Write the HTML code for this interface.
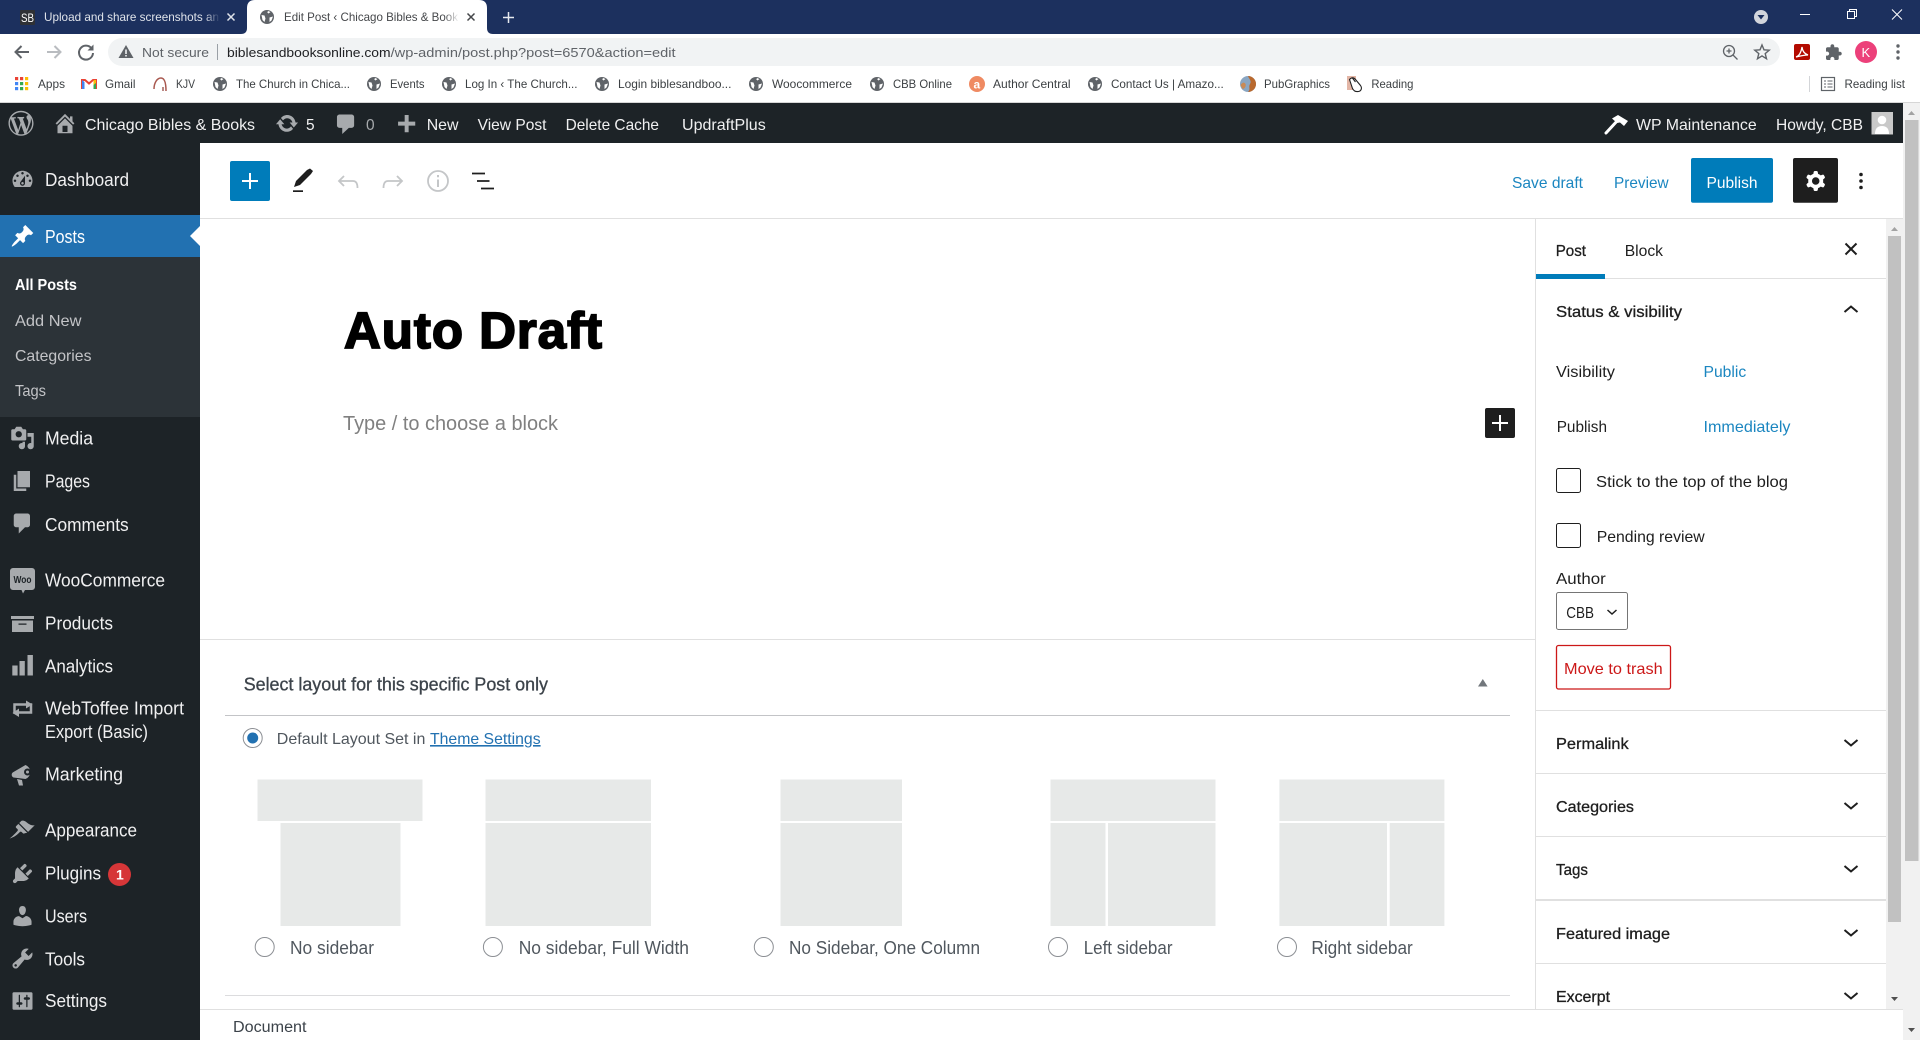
<!DOCTYPE html>
<html lang="en"><head><meta charset="utf-8"><title>Edit Post ‹ Chicago Bibles &amp; Books</title>
<style>
html,body{margin:0;padding:0;background:#fff;overflow:hidden;width:1920px;height:1040px}
svg{display:block}
text{font-family:"Liberation Sans",Arial,sans-serif;white-space:pre}
.tab{font-size:12px}
.bm{font-size:12px;fill:#3c4043}
.ab{font-size:16px;fill:#f0f0f1}
.m{font-size:18px;fill:#f0f0f1}
.s{font-size:16px;fill:#c3c4c7}
.p{font-size:16px;fill:#1e1e1e}
.sb{stroke-width:.3px}
.l{font-size:18px;fill:#50575e}
.b{font-size:16px;fill:#1b86c0}
.ic{fill:#a7aaad}
.d{fill:none;stroke:#1e1e1e;stroke-width:2}
</style></head><body>
<svg xmlns="http://www.w3.org/2000/svg" width="1920" height="1040" viewBox="0 0 1920 1040">
<defs>
<linearGradient id="f1" x1="0" x2="1" y1="0" y2="0"><stop offset="0" stop-color="#1c305e" stop-opacity="0"/><stop offset="1" stop-color="#1c305e"/></linearGradient>
<linearGradient id="f2" x1="0" x2="1" y1="0" y2="0"><stop offset="0" stop-color="#fff" stop-opacity="0"/><stop offset="1" stop-color="#fff"/></linearGradient>
<g id="globe"><circle r="7" fill="#5f6368"/><path d="M-5.500-2L-2.500-1.500-1.500 1.500-2.500 5-4.500 3zM1-6L3.500-5 1.500-3.500.3-4.500zM2.500.5L6-.5 4.500 3.500 2.500 5z" fill="#fff"/></g>
</defs>

<!-- chrome tab strip -->
<rect width="1920" height="34" fill="#1c305e"/>
<rect x="20" y="10" width="15" height="15" rx="1" fill="#2f3135"/>
<text x="21" y="22" font-size="12" fill="#fff" textLength="13" lengthAdjust="spacingAndGlyphs">SB</text>
<text class="tab" x="44" y="21" fill="#dfe3ea" textLength="175" lengthAdjust="spacingAndGlyphs">Upload and share screenshots an</text>
<rect x="205" y="8" width="15" height="20" fill="url(#f1)"/>
<path d="M227.500 13.500l7 7m0-7l-7 7" stroke="#dfe3ea" stroke-width="1.500" fill="none"/>
<path d="M241 34Q247 34 247 28V8Q247 0 255 0H479Q487 0 487 8V28Q487 34 493 34Z" fill="#fff"/>
<use href="#globe" x="267" y="17"/>
<text class="tab" x="284" y="21" fill="#45474a" textLength="174" lengthAdjust="spacingAndGlyphs">Edit Post ‹ Chicago Bibles &amp; Book</text>
<rect x="444" y="8" width="15" height="20" fill="url(#f2)"/>
<path d="M467.500 13.500l7 7m0-7l-7 7" stroke="#45474a" stroke-width="1.500" fill="none"/>
<path d="M503 17.500h11m-5.500-5.500v11" stroke="#e6e9ef" stroke-width="1.500" fill="none"/>
<circle cx="1761" cy="17" r="7" fill="#d2d5dc"/><path d="M1757.500 15h7l-3.500 4.500z" fill="#1c305e"/>
<path d="M1800 14.500h10" stroke="#fff" stroke-width="1"/>
<path d="M1847.500 11.500h7v7h-7zM1849.500 11.500v-2h7v7h-2" stroke="#fff" stroke-width="1" fill="none"/>
<path d="M1892 9.500l10 10m0-10l-10 10" stroke="#fff" stroke-width="1" fill="none"/>

<!-- chrome toolbar -->
<rect y="34" width="1920" height="68" fill="#fff"/>
<path d="M29 52H16M21.500 46L15.500 52l6 6" stroke="#5f6368" stroke-width="2" fill="none"/>
<path d="M47 52H60M54.500 46L60.500 52l-6 6" stroke="#b9bcc0" stroke-width="2" fill="none"/>
<path d="M91.500 48.300A7 7 0 1 0 93 53" stroke="#5f6368" stroke-width="2" fill="none"/><path d="M93.500 44.500v6h-6z" fill="#5f6368"/>
<path d="M108 52a14 14 0 0 1 14-14H1766a14 14 0 0 1 0 28H122a14 14 0 0 1-14-14z" fill="#f1f3f4"/>
<path d="M126 45l7.500 13h-15z" fill="#5f6368"/><path d="M125.200 49.500h1.600v4.500h-1.600zM125.200 55h1.600v1.500h-1.600z" fill="#f1f3f4"/>
<text x="142" y="57" font-size="13" fill="#5f6368" textLength="67" lengthAdjust="spacingAndGlyphs">Not secure</text>
<rect x="217" y="44" width="1" height="16" fill="#9aa0a6"/>
<text x="227" y="57" font-size="13" fill="#202124" textLength="163.600" lengthAdjust="spacingAndGlyphs">biblesandbooksonline.com</text>
<text x="390.600" y="57" font-size="13" fill="#5f6368" textLength="285" lengthAdjust="spacingAndGlyphs">/wp-admin/post.php?post=6570&amp;action=edit</text>
<circle cx="1729" cy="51" r="5.500" fill="none" stroke="#5f6368" stroke-width="1.300"/><path d="M1733 55l4.500 4.500M1726.500 51h5M1729 48.500v5" stroke="#5f6368" stroke-width="1.300" fill="none"/>
<path d="M1762 45l2 4.800 5.200.4-4 3.400 1.300 5.100-4.500-2.800-4.500 2.800 1.300-5.100-4-3.400 5.200-.4z" fill="none" stroke="#5f6368" stroke-width="1.400"/>
<rect x="1794" y="44" width="16" height="16" rx="2" fill="#b30b00"/>
<path d="M1796 57c3-1 5-4 6-10 .5 5 3 7 6 8-3 0-6 .5-12 2z" fill="none" stroke="#fff" stroke-width="1.300"/>
<g transform="translate(1824.500 43.500) scale(.75)"><path d="M20.500 11H19V7c0-1.100-.9-2-2-2h-4V3.500C13 2.120 11.880 1 10.500 1S8 2.120 8 3.500V5H4c-1.100 0-1.990.9-1.990 2v3.800H3.500c1.490 0 2.700 1.210 2.700 2.700s-1.210 2.700-2.700 2.700H2V20c0 1.100.9 2 2 2h3.800v-1.500c0-1.490 1.210-2.700 2.700-2.700 1.490 0 2.700 1.210 2.700 2.700V22H17c1.100 0 2-.9 2-2v-4h1.500c1.380 0 2.500-1.120 2.500-2.500S21.880 11 20.500 11z" fill="#5f6368"/></g>
<circle cx="1866" cy="52" r="11" fill="#ec407a"/><text x="1861.500" y="57" font-size="13" fill="#fff">K</text>
<circle cx="1898" cy="46" r="1.700" fill="#5f6368"/><circle cx="1898" cy="52" r="1.700" fill="#5f6368"/><circle cx="1898" cy="58" r="1.700" fill="#5f6368"/>

<!-- bookmarks -->
<g>
<rect x="15" y="77" width="3.200" height="3.200" fill="#ea4335"/><rect x="20" y="77" width="3.200" height="3.200" fill="#ea4335"/><rect x="25" y="77" width="3.200" height="3.200" fill="#fbbc04"/>
<rect x="15" y="82" width="3.200" height="3.200" fill="#4285f4"/><rect x="20" y="82" width="3.200" height="3.200" fill="#34a853"/><rect x="25" y="82" width="3.200" height="3.200" fill="#fbbc04"/>
<rect x="15" y="87" width="3.200" height="3.200" fill="#4285f4"/><rect x="20" y="87" width="3.200" height="3.200" fill="#34a853"/><rect x="25" y="87" width="3.200" height="3.200" fill="#fbbc04"/>
</g>
<text class="bm" x="38" y="88" textLength="27" lengthAdjust="spacingAndGlyphs">Apps</text>
<path d="M82 89V80l3 0 4 3.500 4-3.500 3 0v9" fill="none" stroke="#ea4335" stroke-width="2"/><path d="M82 80v9h2.500v-7z" fill="#4285f4"/><path d="M96 80v9h-2.500v-7z" fill="#34a853"/><path d="M93.500 80l2.500 0v3l-2.500 2z" fill="#fbbc04"/>
<text class="bm" x="105" y="88" textLength="30.500" lengthAdjust="spacingAndGlyphs">Gmail</text>
<path d="M154 89c0-6 3-11 7-11s5 6 5 13" fill="none" stroke="#a9584f" stroke-width="1.500"/><path d="M163 87v4" stroke="#8a3a33" stroke-width="1.200"/>
<text class="bm" x="176" y="88" textLength="19" lengthAdjust="spacingAndGlyphs">KJV</text>
<use href="#globe" x="220" y="84"/><text class="bm" x="236" y="88" textLength="114" lengthAdjust="spacingAndGlyphs">The Church in Chica...</text>
<use href="#globe" x="374" y="84"/><text class="bm" x="390" y="88" textLength="34.500" lengthAdjust="spacingAndGlyphs">Events</text>
<use href="#globe" x="449" y="84"/><text class="bm" x="465" y="88" textLength="112.500" lengthAdjust="spacingAndGlyphs">Log In ‹ The Church...</text>
<use href="#globe" x="602" y="84"/><text class="bm" x="618" y="88" textLength="113.400" lengthAdjust="spacingAndGlyphs">Login biblesandboo...</text>
<use href="#globe" x="756" y="84"/><text class="bm" x="772" y="88" textLength="80" lengthAdjust="spacingAndGlyphs">Woocommerce</text>
<use href="#globe" x="877" y="84"/><text class="bm" x="893" y="88" textLength="59" lengthAdjust="spacingAndGlyphs">CBB Online</text>
<circle cx="977" cy="84" r="8" fill="#ef8a62"/><text x="973.500" y="88.500" font-size="12" font-weight="bold" fill="#fff">a</text>
<text class="bm" x="993" y="88" textLength="77.600" lengthAdjust="spacingAndGlyphs">Author Central</text>
<use href="#globe" x="1095" y="84"/><text class="bm" x="1111" y="88" textLength="112.700" lengthAdjust="spacingAndGlyphs">Contact Us | Amazo...</text>
<circle cx="1248" cy="84" r="8" fill="#8aa6c2"/><path d="M1248 76a8 8 0 0 1 0 16c3-3 0-5 2-8s-1-5-2-8z" fill="#b9692e"/><path d="M1240.500 85c2-3 4-3 5-1s-1 5-3 5z" fill="#c98a55"/>
<text class="bm" x="1264" y="88" textLength="66" lengthAdjust="spacingAndGlyphs">PubGraphics</text>
<rect x="1347" y="76" width="9" height="14" fill="#e3b6a6"/><path d="M1349.500 79.500c2-2.500 4.500-2 6 0l5 6c2 3 .5 5.500-2 6-3 .5-5-1-6-3zM1352 77.500l3.500 4.500" fill="#fff" stroke="#222" stroke-width="1.100"/>
<text class="bm" x="1371.400" y="88" textLength="42" lengthAdjust="spacingAndGlyphs">Reading</text>
<rect x="1809" y="76" width="1" height="16" fill="#d3d5d8"/>
<rect x="1821.500" y="77.500" width="13" height="13" fill="none" stroke="#5f6368" stroke-width="1.200"/><path d="M1824 81h2m1.500 0h5M1824 84h2m1.500 0h5M1824 87h2m1.500 0h5" stroke="#5f6368" stroke-width="1.100"/>
<text class="bm" x="1844.500" y="88" textLength="60.500" lengthAdjust="spacingAndGlyphs">Reading list</text>
<rect y="102" width="1920" height="1" fill="#d6d6d6"/>

<!-- admin bar -->
<rect y="103" width="1903" height="40" fill="#1d2327"/>
<g class="ic" transform="translate(8.500 110.800) scale(1.250)"><path fill-rule="evenodd" d="M20 10c0-5.510-4.490-10-10-10C4.480 0 0 4.490 0 10c0 5.520 4.480 10 10 10 5.510 0 10-4.480 10-10zM7.780 15.370L4.370 6.220c.55-.02 1.170-.08 1.170-.08.5-.06.44-1.130-.06-1.110 0 0-1.450.11-2.370.11-.18 0-.37 0-.58-.01C4.120 2.690 6.870 1.110 10 1.110c2.330 0 4.450.87 6.050 2.340-.68-.11-1.650.39-1.650 1.580 0 .74.45 1.360.9 2.100.35.61.55 1.360.55 2.460 0 1.490-1.400 5-1.400 5l-3.030-8.370c.54-.02.82-.17.82-.17.5-.05.44-1.250-.06-1.220 0 0-1.440.12-2.380.12-.87 0-2.330-.12-2.330-.12-.5-.03-.56 1.200-.06 1.220l.92.08 1.260 3.410zM17.410 10c.24-.64.74-1.870.43-4.250.7 1.290 1.050 2.710 1.050 4.250 0 3.290-1.730 6.240-4.400 7.780.97-2.590 1.940-5.200 2.920-7.780zM6.100 18.090C3.120 16.650 1.110 13.530 1.110 10c0-1.300.23-2.480.72-3.590C3.250 10.300 4.670 14.200 6.100 18.090zm4.030-6.630l2.580 6.980c-.86.29-1.760.45-2.710.45-.79 0-1.570-.11-2.290-.33.81-2.380 1.620-4.740 2.420-7.100z"/></g>
<g class="ic" transform="translate(52.500 110.800) scale(1.250)"><path fill-rule="evenodd" d="M16 8.500l1.530 1.530-1.060 1.060L10 4.620l-6.470 6.470-1.060-1.060L10 2.500l4 4v-2h2v4zm-6-2.460l6 5.990V18H4v-5.970zM12 17v-5H8v5h4z"/></g>
<text class="ab" x="85" y="130" textLength="170" lengthAdjust="spacingAndGlyphs">Chicago Bibles &amp; Books</text>
<g class="ic" transform="translate(275 110.900) scale(1.200 1.250)"><path d="M10.200 3.280c3.530 0 6.430 2.610 6.920 6h2.080l-3.500 4-3.500-4h2.320c-.45-1.970-2.210-3.450-4.320-3.450-1.450 0-2.730.71-3.540 1.780L4.950 5.660C6.230 4.200 8.110 3.280 10.200 3.280zm-.4 13.440c-3.520 0-6.430-2.610-6.920-6H.8l3.500-4c1.170 1.330 2.330 2.670 3.500 4H5.480c.45 1.970 2.210 3.450 4.320 3.450 1.450 0 2.730-.71 3.540-1.780l1.710 1.950c-1.280 1.460-3.150 2.380-5.250 2.380z"/></g>
<text class="ab" x="306" y="130" textLength="8.600" lengthAdjust="spacingAndGlyphs">5</text>
<g class="ic" transform="translate(333 112) scale(1.320 1.220)"><path d="M5 2h9c1.100 0 2 .9 2 2v7c0 1.100-.9 2-2 2h-2l-5 5v-5H5c-1.100 0-2-.9-2-2V4c0-1.100.9-2 2-2z"/></g>
<text class="ab" x="366" y="130" style="fill:#a7aaad" textLength="8.600" lengthAdjust="spacingAndGlyphs">0</text>
<g class="ic" transform="translate(392.800 112.400) scale(1.320)"><path d="M17 7v3h-5v5H9v-5H4V7h5V2h3v5h5z"/></g>
<text class="ab" x="426.700" y="130" textLength="31.800" lengthAdjust="spacingAndGlyphs">New</text>
<text class="ab" x="477.600" y="130" textLength="68.900" lengthAdjust="spacingAndGlyphs">View Post</text>
<text class="ab" x="565.600" y="130" textLength="93.400" lengthAdjust="spacingAndGlyphs">Delete Cache</text>
<text class="ab" x="682" y="130" textLength="83.700" lengthAdjust="spacingAndGlyphs">UpdraftPlus</text>
<path d="M1606 133l12-13" stroke="#fff" stroke-width="3" stroke-linecap="round"/><path d="M1612 118.500l6-3.500 10 6-4 5-4-3.500-3 .5z" fill="#fff"/>
<text class="ab" x="1636" y="130" textLength="120.700" lengthAdjust="spacingAndGlyphs">WP Maintenance</text>
<text class="ab" x="1776" y="130" textLength="87" lengthAdjust="spacingAndGlyphs">Howdy, CBB</text>
<rect x="1871.500" y="112" width="21.500" height="22.500" fill="#c9c9c9"/><circle cx="1882" cy="120" r="4.300" fill="#fff"/><path d="M1875 134c0-6 3-8 7-8s7 2 7 8z" fill="#fff"/>

<!-- sidebar -->
<rect y="143" width="200" height="897" fill="#1d2327"/>
<g class="ic" transform="translate(10 167) scale(1.250)"><path fill-rule="evenodd" d="M3.760 16h12.480c1.100-1.370 1.760-3.110 1.760-5 0-4.420-3.580-8-8-8s-8 3.580-8 8c0 1.890.66 3.630 1.760 5zM10 4c.55 0 1 .45 1 1s-.45 1-1 1-1-.45-1-1 .45-1 1-1zM6 6c.55 0 1 .45 1 1s-.45 1-1 1-1-.45-1-1 .45-1 1-1zm8 0c.55 0 1 .45 1 1s-.45 1-1 1-1-.45-1-1 .45-1 1-1zm-5.370 5.550L12 7v6c0 1.100-.9 2-2 2s-2-.9-2-2c0-.57.24-1.080.63-1.450zM4 10c.55 0 1 .45 1 1s-.45 1-1 1-1-.45-1-1 .45-1 1-1zm12 0c.55 0 1 .45 1 1s-.45 1-1 1-1-.45-1-1 .45-1 1-1zm-5 3c0-.55-.45-1-1-1s-1 .45-1 1 .45 1 1 1 1-.45 1-1z"/></g>
<text class="m" x="45" y="186" textLength="84" lengthAdjust="spacingAndGlyphs">Dashboard</text>
<rect y="215" width="200" height="42" fill="#2271b1"/>
<path d="M200 226l-10 10 10 10z" fill="#fff"/>
<g fill="#fff" transform="translate(10 223.500) scale(1.250)"><path d="M10.440 3.020l1.820-1.820 6.360 6.350-1.830 1.820c-1.050-.68-2.480-.57-3.410.36l-.75.75c-.92.93-1.040 2.350-.35 3.410l-1.830 1.820-2.410-2.410-2.800 2.790c-.42.42-3.380 2.710-3.800 2.290s1.860-3.390 2.280-3.810l2.790-2.790L4.100 9.360l1.830-1.820c1.050.69 2.480.57 3.400-.36l.75-.75c.93-.92 1.050-2.350.36-3.410z"/></g>
<text class="m" x="45" y="243" style="fill:#fff" textLength="40" lengthAdjust="spacingAndGlyphs">Posts</text>
<rect y="257" width="200" height="160" fill="#2c3338"/>
<text class="s" x="15" y="290" style="fill:#fff" font-weight="bold" textLength="62" lengthAdjust="spacingAndGlyphs">All Posts</text>
<text class="s" x="15" y="326" textLength="66.500" lengthAdjust="spacingAndGlyphs">Add New</text>
<text class="s" x="15" y="361" textLength="76.500" lengthAdjust="spacingAndGlyphs">Categories</text>
<text class="s" x="15" y="396" textLength="31" lengthAdjust="spacingAndGlyphs">Tags</text>

<g class="ic" transform="translate(10 425.500) scale(1.250)"><path fill-rule="evenodd" d="M13 11V4c0-.55-.45-1-1-1h-1.670L9 1H5L3.670 3H2c-.55 0-1 .45-1 1v7c0 .55.45 1 1 1h10c.55 0 1-.45 1-1zM7 4.500c1.380 0 2.500 1.120 2.500 2.500S8.380 9.500 7 9.500 4.500 8.380 4.500 7 5.620 4.500 7 4.500zM14 6h5v10.500c0 1.380-1.120 2.500-2.500 2.500S14 17.880 14 16.500s1.120-2.500 2.500-2.500c.17 0 .34.020.5.050V9h-3V6zm-4 8.050V13h2v3.500c0 1.380-1.120 2.500-2.500 2.500S7 17.880 7 16.500 8.120 14 9.500 14c.17 0 .34.020.5.050z"/></g>
<text class="m" x="45" y="444.500" textLength="48" lengthAdjust="spacingAndGlyphs">Media</text>
<g class="ic" transform="translate(10 468.500) scale(1.250)"><path d="M6 15V2h10v13H6zm-1 1h8v2H3V5h2v11z"/></g>
<text class="m" x="45" y="487.500" textLength="45" lengthAdjust="spacingAndGlyphs">Pages</text>
<g class="ic" transform="translate(10 511) scale(1.250)"><path d="M5 2h9c1.100 0 2 .9 2 2v7c0 1.100-.9 2-2 2h-2l-5 5v-5H5c-1.100 0-2-.9-2-2V4c0-1.100.9-2 2-2z"/></g>
<text class="m" x="45" y="531" textLength="83.700" lengthAdjust="spacingAndGlyphs">Comments</text>

<path d="M13 568h19a3 3 0 0 1 3 3v16a3 3 0 0 1-3 3h-7l-2 3.500-1.500-3.500H13a3 3 0 0 1-3-3v-16a3 3 0 0 1 3-3z" fill="#a7aaad"/>
<text x="13.500" y="583" font-size="10" font-weight="bold" fill="#1d2327" textLength="18" lengthAdjust="spacingAndGlyphs">Woo</text>
<text class="m" x="45" y="586.500" textLength="120" lengthAdjust="spacingAndGlyphs">WooCommerce</text>
<path d="M11 616h23v3H11zM12 620.500h21V632H12zM18.500 623.500v1.300h8v-1.300z" class="ic" fill-rule="evenodd"/>
<text class="m" x="45" y="629.500" textLength="68" lengthAdjust="spacingAndGlyphs">Products</text>
<path d="M12.300 665.500h5.300V675.500h-5.300zM19.500 661h5.300V675.500h-5.300zM27.500 655h5.400V675.500h-5.400z" class="ic"/>
<text class="m" x="45" y="672.500" textLength="68" lengthAdjust="spacingAndGlyphs">Analytics</text>
<rect x="14.500" y="704.500" width="16.500" height="8" fill="none" stroke="#a7aaad" stroke-width="2.500"/>
<path d="M26 700.500l6.500 4-6.500 4zM19 708.500l-6.500 4.500 6.500 4z" class="ic"/>
<text class="m" x="45" y="714.500" textLength="139" lengthAdjust="spacingAndGlyphs">WebToffee Import</text>
<text class="m" x="45" y="738" textLength="103" lengthAdjust="spacingAndGlyphs">Export (Basic)</text>
<path d="M13.500 772L25.500 765a7.500 7.500 0 0 1 0 14L13.500 777.500a3 3 0 0 1 0-5.500zM17 779l5 1 1 5.500h-4z" class="ic"/><circle cx="27.500" cy="772" r="3.500" fill="#1d2327"/><circle cx="27.500" cy="772" r="1.500" fill="#a7aaad"/>
<text class="m" x="45" y="780.500" textLength="78" lengthAdjust="spacingAndGlyphs">Marketing</text>

<g class="ic" transform="translate(10 818) scale(1.250)"><path d="M14.480 11.060L7.410 3.990l1.500-1.500c.5-.56 2.300-.47 3.510.32 1.210.8 1.430 1.280 2.910 2.100 1.180.64 2.450 1.260 4.450.85zm-.71.71L6.700 4.700 4.930 6.470c-.39.39-.39 1.020 0 1.410l1.060 1.060c.39.39.39 1.030 0 1.420-.6.6-1.430 1.590-2.310 2.470-2.630 2.650-3.890 3.530-3.890 3.530s3.400-.99 5.900-3.100c.9-.8 1.600-1.500 2.200-2.100.4-.4 1-.4 1.400 0l1.060 1.060c.39.39 1.020.39 1.410 0z"/></g>
<text class="m" x="45" y="836.500" textLength="92" lengthAdjust="spacingAndGlyphs">Appearance</text>
<g class="ic" transform="translate(10 861) scale(1.250)"><path d="M13.110 4.360L9.870 7.600 8 5.730l3.240-3.240c.35-.34 1.050-.2 1.560.32.52.51.66 1.210.31 1.550zm-8 1.770l.91-1.120 9.010 9.010-1.190.84c-.71.71-2.630 1.160-3.820 1.160H6.140L4.900 17.260c-.59.59-1.540.59-2.120 0-.59-.58-.59-1.530 0-2.120l1.240-1.240v-3.880c0-1.130.4-3.190 1.090-3.890zm7.260 3.970l3.240-3.240c.34-.35 1.040-.21 1.550.31.52.51.66 1.210.31 1.550l-3.240 3.250z"/></g>
<text class="m" x="45" y="879.500" textLength="56" lengthAdjust="spacingAndGlyphs">Plugins</text>
<circle cx="119.500" cy="874.500" r="11.500" fill="#d63638"/><text x="116" y="879.500" font-size="14" font-weight="bold" fill="#fff">1</text>
<g class="ic" transform="translate(10 903.500) scale(1.250)"><path d="M10 9.250c-2.270 0-2.730-3.440-2.730-3.440C7 4.020 7.820 2 9.970 2c2.160 0 2.980 2.020 2.710 3.810 0 0-.41 3.440-2.680 3.440zm0 2.570L12.720 10c2.390 0 4.520 2.330 4.520 4.530v2.490s-3.650 1.130-7.240 1.130c-3.650 0-7.240-1.130-7.240-1.130v-2.490c0-2.250 1.940-4.480 4.470-4.480z"/></g>
<text class="m" x="45" y="922.500" textLength="42" lengthAdjust="spacingAndGlyphs">Users</text>
<g class="ic" transform="translate(10 946) scale(1.250)"><path fill-rule="evenodd" d="M16.680 9.770c-1.340 1.340-3.300 1.670-4.950.99l-5.410 6.520c-.99.99-2.590.99-3.580 0s-.99-2.590 0-3.570l6.520-5.420c-.68-1.650-.35-3.610.99-4.950 1.280-1.280 3.120-1.620 4.720-1.060l-2.890 2.890 2.820 2.820 2.860-2.870c.53 1.580.18 3.390-1.080 4.650zM3.810 16.210c.4.39 1.040.39 1.430 0 .4-.4.4-1.040 0-1.430-.39-.4-1.030-.4-1.430 0-.39.39-.39 1.030 0 1.430z"/></g>
<text class="m" x="45" y="965.500" textLength="40" lengthAdjust="spacingAndGlyphs">Tools</text>
<g class="ic" transform="translate(10 988.500) scale(1.250)"><path fill-rule="evenodd" d="M18 16V4c0-.55-.45-1-1-1H3c-.55 0-1 .45-1 1v12c0 .55.45 1 1 1h14c.55 0 1-.45 1-1zM8 11h1c.55 0 1 .45 1 1s-.45 1-1 1H8v1.500c0 .28-.22.5-.5.5s-.5-.22-.5-.5V13H6c-.55 0-1-.45-1-1s.45-1 1-1h1V5.500c0-.28.22-.5.5-.5s.5.22.5.5V11zm5-2h-1c-.55 0-1-.45-1-1s.45-1 1-1h1V5.500c0-.28.22-.5.5-.5s.5.22.5.5V7h1c.55 0 1 .45 1 1s-.45 1-1 1h-1v5.500c0 .28-.22.5-.5.5s-.5-.22-.5-.5V9z"/></g>
<text class="m" x="45" y="1007" textLength="62" lengthAdjust="spacingAndGlyphs">Settings</text>

<!-- editor header -->
<rect x="200" y="218" width="1703" height="1" fill="#e0e0e0"/>
<rect x="230" y="161" width="40" height="40" rx="2" fill="#007cba"/>
<path d="M242 181h16m-8-8v16" stroke="#fff" stroke-width="2" fill="none"/>
<path d="M294 187l2-6 11-11 3-1.500 3 2.500-2 3-11 11z" fill="#1e1e1e"/><rect x="293" y="190.300" width="10" height="1.700" fill="#1e1e1e"/>
<path d="M344 176l-5 5 5 5M339.500 181H353c3 0 4.500 2 4.500 7" fill="none" stroke="#c4c6c8" stroke-width="1.800"/>
<path d="M397 176l5 5-5 5M401.500 181H388c-3 0-4.500 2-4.500 7" fill="none" stroke="#c4c6c8" stroke-width="1.800"/>
<circle cx="438" cy="181" r="10" fill="none" stroke="#c4c6c8" stroke-width="1.800"/><path d="M437 179.500h2v7.500h-2zM437 175h2v2.300h-2z" fill="#c4c6c8"/>
<path d="M472 173.500h13M477 181h12.500M481 188.500h13" stroke="#1e1e1e" stroke-width="1.800" fill="none"/>
<text class="b" x="1512" y="188" textLength="71" lengthAdjust="spacingAndGlyphs">Save draft</text>
<text class="b" x="1614" y="188" textLength="54.600" lengthAdjust="spacingAndGlyphs">Preview</text>
<rect x="1691" y="158" width="82" height="44.700" rx="2" fill="#007cba"/>
<text x="1706.500" y="188" font-size="16" fill="#fff" textLength="51" lengthAdjust="spacingAndGlyphs">Publish</text>
<rect x="1793" y="158" width="45" height="44.700" rx="2" fill="#1e1e1e"/>
<g transform="translate(1800.800 166) scale(1.250)"><path fill="#fff" fill-rule="evenodd" d="M10.289 4.836A1 1 0 0111.275 4h1.306a1 1 0 01.987.836l.244 1.466c.787.26 1.503.679 2.108 1.218l1.393-.522a1 1 0 011.216.437l.653 1.130a1 1 0 01-.23 1.273l-1.148.944a6.025 6.025 0 010 2.435l1.149.946a1 1 0 01.23 1.272l-.653 1.130a1 1 0 01-1.216.437l-1.394-.522c-.605.54-1.320.958-2.108 1.218l-.244 1.466a1 1 0 01-.987.836h-1.306a1 1 0 01-.986-.836l-.244-1.466a5.995 5.995 0 01-2.108-1.218l-1.394.522a1 1 0 01-1.217-.436l-.653-1.131a1 1 0 01.23-1.272l1.149-.946a6.026 6.026 0 010-2.435l-1.148-.944a1 1 0 01-.23-1.272l.653-1.131a1 1 0 011.217-.437l1.393.522a5.994 5.994 0 012.108-1.218l.244-1.466zM14.929 12a3 3 0 11-6 0 3 3 0 016 0z"/></g>
<circle cx="1861" cy="174.500" r="1.800" fill="#1e1e1e"/><circle cx="1861" cy="181" r="1.800" fill="#1e1e1e"/><circle cx="1861" cy="187.500" r="1.800" fill="#1e1e1e"/>

<!-- editor content -->
<text x="344" y="348" font-size="51" font-weight="bold" fill="#000" stroke="#000" stroke-width="1.800" textLength="258">Auto Draft</text>
<text x="343" y="430" font-size="20" fill="#808080" textLength="215" lengthAdjust="spacingAndGlyphs">Type / to choose a block</text>
<rect x="1485" y="408" width="30" height="30" rx="2" fill="#1e1e1e"/>
<path d="M1492 423h16m-8-8v16" stroke="#fff" stroke-width="2" fill="none"/>
<rect x="200" y="639" width="1336" height="1" fill="#e0e0e0"/>
<text class="sb" x="243.700" y="690.500" font-size="18" fill="#3c434a" stroke="#3c434a" textLength="304.300" lengthAdjust="spacingAndGlyphs">Select layout for this specific Post only</text>
<path d="M1478 686.500l4.800-7.500 4.800 7.500z" fill="#72777c"/>
<rect x="225" y="715" width="1285" height="1" fill="#c3c4c7"/>
<circle cx="252.700" cy="738" r="9.500" fill="#fff" stroke="#8c8f94"/><circle cx="252.700" cy="738" r="5.500" fill="#2271b1"/>
<text x="276.800" y="744" font-size="16" fill="#50575e" textLength="148.600" lengthAdjust="spacingAndGlyphs">Default Layout Set in</text>
<text x="430" y="744" font-size="16" fill="#2271b1" text-decoration="underline" textLength="110.600" lengthAdjust="spacingAndGlyphs">Theme Settings</text>

<g fill="#e7e9e8">
<rect x="257.500" y="779.500" width="165" height="41.500"/><rect x="280.500" y="823" width="120" height="103"/>
<rect x="485.500" y="779.500" width="165.500" height="41.500"/><rect x="485.500" y="823" width="165.500" height="103"/>
<rect x="780.500" y="779.500" width="121.500" height="41.500"/><rect x="780.500" y="823" width="121.500" height="103"/>
<rect x="1050.500" y="779.500" width="165" height="41.500"/><rect x="1050.500" y="823" width="55" height="103"/><rect x="1108" y="823" width="107.500" height="103"/>
<rect x="1279.400" y="779.500" width="165" height="41.500"/><rect x="1279.400" y="823" width="107.600" height="103"/><rect x="1389.700" y="823" width="54.700" height="103"/>
</g>
<g fill="#fff" stroke="#8c8f94">
<circle cx="264.700" cy="947" r="9.500"/><circle cx="492.900" cy="947" r="9.500"/><circle cx="763.800" cy="947" r="9.500"/><circle cx="1058" cy="947" r="9.500"/><circle cx="1287" cy="947" r="9.500"/>
</g>
<text class="l" x="290" y="954" textLength="84" lengthAdjust="spacingAndGlyphs">No sidebar</text>
<text class="l" x="518.700" y="954" textLength="170.300" lengthAdjust="spacingAndGlyphs">No sidebar, Full Width</text>
<text class="l" x="789" y="954" textLength="191" lengthAdjust="spacingAndGlyphs">No Sidebar, One Column</text>
<text class="l" x="1083.700" y="954" textLength="88.800" lengthAdjust="spacingAndGlyphs">Left sidebar</text>
<text class="l" x="1311.400" y="954" textLength="101.400" lengthAdjust="spacingAndGlyphs">Right sidebar</text>
<rect x="225" y="995" width="1285" height="1" fill="#dcdcde"/>

<!-- right panel -->
<rect x="1535" y="219" width="1" height="790" fill="#e0e0e0"/>
<text class="p sb" stroke="#1e1e1e" x="1555.700" y="256" textLength="30.300" lengthAdjust="spacingAndGlyphs">Post</text>
<text class="p" x="1624.700" y="256" textLength="38.300" lengthAdjust="spacingAndGlyphs">Block</text>
<rect x="1536" y="278" width="350" height="1" fill="#e0e0e0"/>
<rect x="1536" y="274" width="69" height="5" fill="#007cba"/>
<path d="M1845.500 243.500l11 11m0-11l-11 11" stroke="#1e1e1e" stroke-width="2" fill="none"/>
<text class="p sb" stroke="#1e1e1e" x="1556" y="317" textLength="126" lengthAdjust="spacingAndGlyphs">Status &amp; visibility</text>
<path class="d" d="M1844.500 312l6.500-5.500 6.500 5.500"/>
<text class="p" x="1556" y="377" textLength="59" lengthAdjust="spacingAndGlyphs">Visibility</text>
<text class="b" x="1703.500" y="377" textLength="42.700" lengthAdjust="spacingAndGlyphs">Public</text>
<text class="p" x="1556.700" y="432" textLength="50.300" lengthAdjust="spacingAndGlyphs">Publish</text>
<text class="b" x="1703.500" y="432" textLength="87" lengthAdjust="spacingAndGlyphs">Immediately</text>
<rect x="1556.500" y="468.500" width="24" height="24" rx="2" fill="#fff" stroke="#1e1e1e"/>
<text class="p" x="1596" y="487" textLength="192" lengthAdjust="spacingAndGlyphs">Stick to the top of the blog</text>
<rect x="1556.500" y="523.500" width="24" height="24" rx="2" fill="#fff" stroke="#1e1e1e"/>
<text class="p" x="1596.700" y="542" textLength="108" lengthAdjust="spacingAndGlyphs">Pending review</text>
<text class="p" x="1556" y="584" textLength="49.700" lengthAdjust="spacingAndGlyphs">Author</text>
<rect x="1556.500" y="592.500" width="71" height="37" rx="2" fill="#fff" stroke="#757575"/>
<text class="p" x="1566.300" y="618" textLength="27.700" lengthAdjust="spacingAndGlyphs">CBB</text>
<path d="M1607.500 610l4.500 4 4.500-4" fill="none" stroke="#1e1e1e" stroke-width="1.500"/>
<rect x="1556.500" y="645.500" width="114" height="43.500" rx="2" fill="#fff" stroke="#cc1818" stroke-width="1.300"/>
<text x="1564" y="674" font-size="16" fill="#cc1818" textLength="98.700" lengthAdjust="spacingAndGlyphs">Move to trash</text>

<g fill="#e0e0e0"><rect x="1536" y="710" width="350" height="1"/><rect x="1536" y="773" width="350" height="1"/><rect x="1536" y="836" width="350" height="1"/><rect x="1536" y="899" width="350" height="2"/><rect x="1536" y="963" width="350" height="1"/></g>
<text class="p sb" stroke="#1e1e1e" x="1556" y="749" textLength="72.700" lengthAdjust="spacingAndGlyphs">Permalink</text>
<path class="d" d="M1844.500 740l6.500 5.500 6.500-5.500"/>
<text class="p sb" stroke="#1e1e1e" x="1556" y="812" textLength="78" lengthAdjust="spacingAndGlyphs">Categories</text>
<path class="d" d="M1844.500 803l6.500 5.500 6.500-5.500"/>
<text class="p sb" stroke="#1e1e1e" x="1556" y="875" textLength="32" lengthAdjust="spacingAndGlyphs">Tags</text>
<path class="d" d="M1844.500 866l6.500 5.500 6.500-5.500"/>
<text class="p sb" stroke="#1e1e1e" x="1556" y="939" textLength="114" lengthAdjust="spacingAndGlyphs">Featured image</text>
<path class="d" d="M1844.500 930l6.500 5.500 6.500-5.500"/>
<text class="p sb" stroke="#1e1e1e" x="1556" y="1002" textLength="54" lengthAdjust="spacingAndGlyphs">Excerpt</text>
<path class="d" d="M1844.500 993l6.500 5.500 6.500-5.500"/>

<!-- inner scrollbar -->
<rect x="1886" y="219" width="17" height="790" fill="#f1f1f1"/>
<rect x="1888" y="236" width="13" height="686" fill="#c1c1c1"/>
<path d="M1891 231h7l-3.500-4z" fill="#a3a3a3"/>
<path d="M1891 997h7l-3.500 4z" fill="#505050"/>

<!-- footer -->
<rect x="200" y="1009" width="1703" height="31" fill="#fff"/>
<rect x="200" y="1009" width="1703" height="1" fill="#e0e0e0"/>
<text x="233" y="1032" font-size="15.500" fill="#3c434a" textLength="73.500" lengthAdjust="spacingAndGlyphs">Document</text>

<!-- outer scrollbar -->
<rect x="1903" y="103" width="17" height="937" fill="#f1f1f1"/>
<rect x="1905" y="120" width="13.500" height="741" fill="#c1c1c1"/>
<path d="M1908 115h7l-3.500-4z" fill="#a3a3a3"/>
<path d="M1908 1028h7l-3.500 4z" fill="#505050"/>
</svg>
</body></html>
